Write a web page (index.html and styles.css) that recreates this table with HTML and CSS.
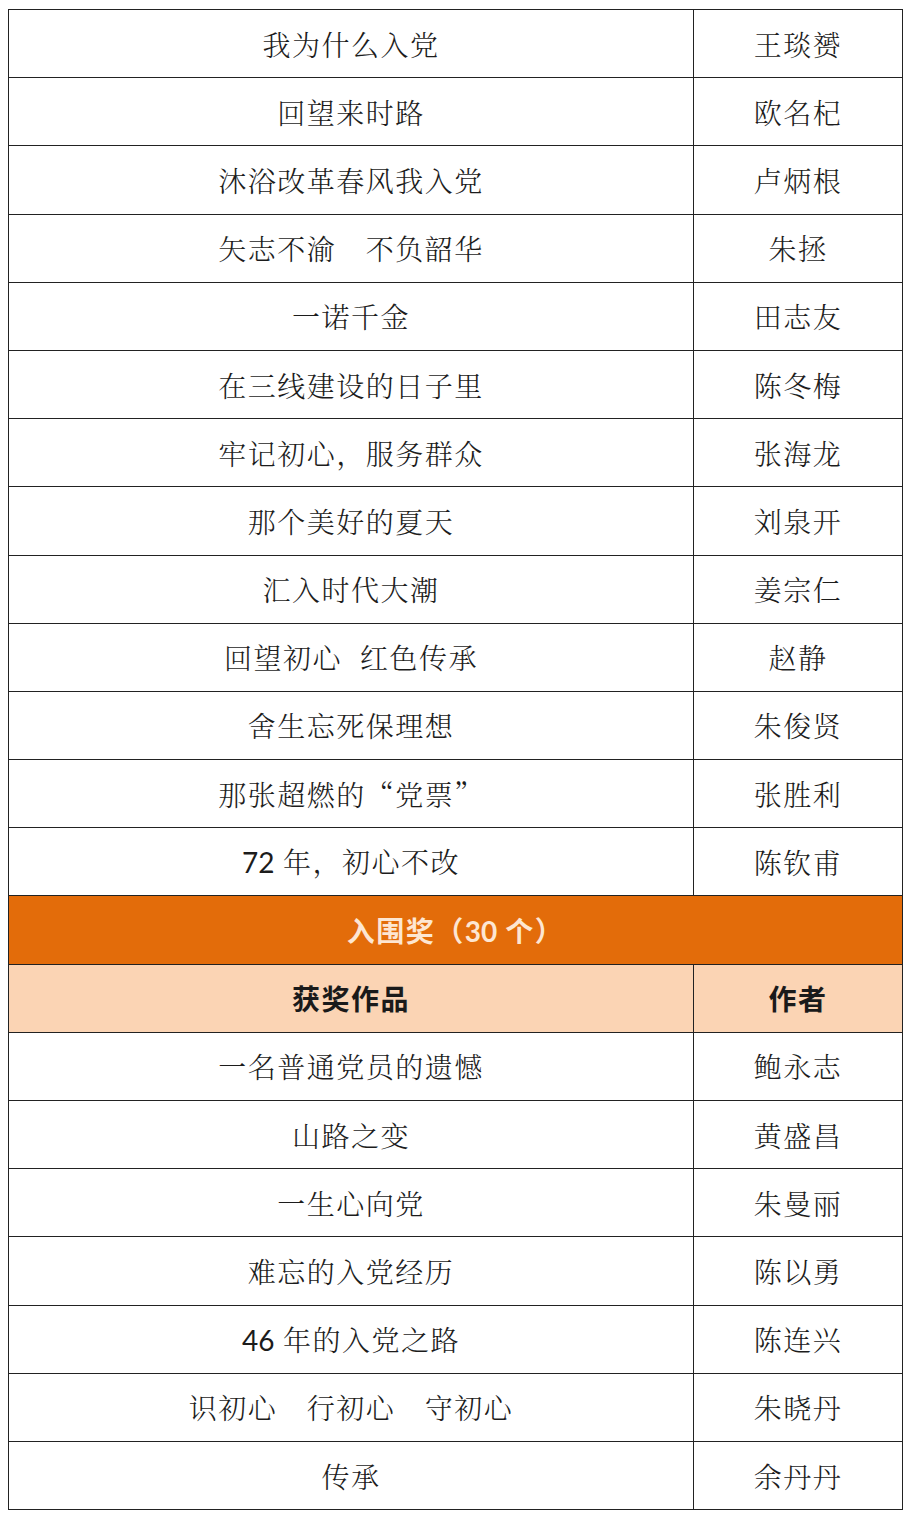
FILE: index.html
```html
<!DOCTYPE html>
<html lang="zh-CN">
<head>
<meta charset="utf-8">
<title>获奖名单</title>
<link rel="stylesheet" href="styles.css">
</head>
<body>
<table class="awards">
  <colgroup><col class="c-work"><col class="c-author"></colgroup>
  <tbody>
    <tr><td>我为什么入党</td><td>王琰赟</td></tr>
    <tr><td>回望来时路</td><td>欧名杞</td></tr>
    <tr><td>沐浴改革春风我入党</td><td>卢炳根</td></tr>
    <tr><td>矢志不渝&emsp;不负韶华</td><td>朱拯</td></tr>
    <tr><td>一诺千金</td><td>田志友</td></tr>
    <tr><td>在三线建设的日子里</td><td>陈冬梅</td></tr>
    <tr><td>牢记初心，服务群众</td><td>张海龙</td></tr>
    <tr><td>那个美好的夏天</td><td>刘泉开</td></tr>
    <tr><td>汇入时代大潮</td><td>姜宗仁</td></tr>
    <tr><td>回望初心<span class="gap"></span>红色传承</td><td>赵静</td></tr>
    <tr><td>舍生忘死保理想</td><td>朱俊贤</td></tr>
    <tr><td>那张超燃的“党票”</td><td>张胜利</td></tr>
    <tr><td><span class="num">72</span> 年，初心不改</td><td>陈钦甫</td></tr>
    <tr class="section"><td colspan="2">入围奖（<span class="num">30</span> 个）</td></tr>
    <tr class="head"><td>获奖作品</td><td>作者</td></tr>
    <tr><td>一名普通党员的遗憾</td><td>鲍永志</td></tr>
    <tr><td>山路之变</td><td>黄盛昌</td></tr>
    <tr><td>一生心向党</td><td>朱曼丽</td></tr>
    <tr><td>难忘的入党经历</td><td>陈以勇</td></tr>
    <tr><td><span class="num">46</span> 年的入党之路</td><td>陈连兴</td></tr>
    <tr><td>识初心&emsp;行初心&emsp;守初心</td><td>朱晓丹</td></tr>
    <tr><td>传承</td><td>余丹丹</td></tr>
  </tbody>
</table>
</body>
</html>
```
FILE: styles.css
```css
html, body {
  margin: 0;
  padding: 0;
  background: #ffffff;
}

body {
  padding: 9px 0 0 8px;
  font-family: "Noto Serif CJK SC", "Noto Sans CJK SC", sans-serif;
  color: #1c1c1c;
}

.awards {
  border-collapse: collapse;
  table-layout: fixed;
  width: 894px;
}

.c-work { width: 685px; }
.c-author { width: 209px; }

.awards td {
  height: 67.2px;
  padding: 0;
  border: 1px solid #222222;
  text-align: center;
  vertical-align: middle;
  font-size: 28px;
  font-weight: 300;
  letter-spacing: 1.5px;
  line-height: 1;
  white-space: nowrap;
}

.num {
  font-family: Lato, "Liberation Sans", sans-serif;
  font-weight: 400;
  letter-spacing: 0;
}

.gap {
  display: inline-block;
  width: 18px;
}

.awards .section td,
.awards .head td {
  font-family: "Noto Sans CJK SC", sans-serif;
  font-weight: 700;
  font-size: 28px;
  letter-spacing: 1.5px;
}

.awards .section td {
  background: #e36c0a;
  color: #fde6d2;
}

.awards .section .num {
  font-family: Lato, "Liberation Sans", sans-serif;
  font-weight: 700;
  letter-spacing: 0;
}

.awards .head td {
  background: #fbd4b4;
  color: #1a1a1a;
}
```
